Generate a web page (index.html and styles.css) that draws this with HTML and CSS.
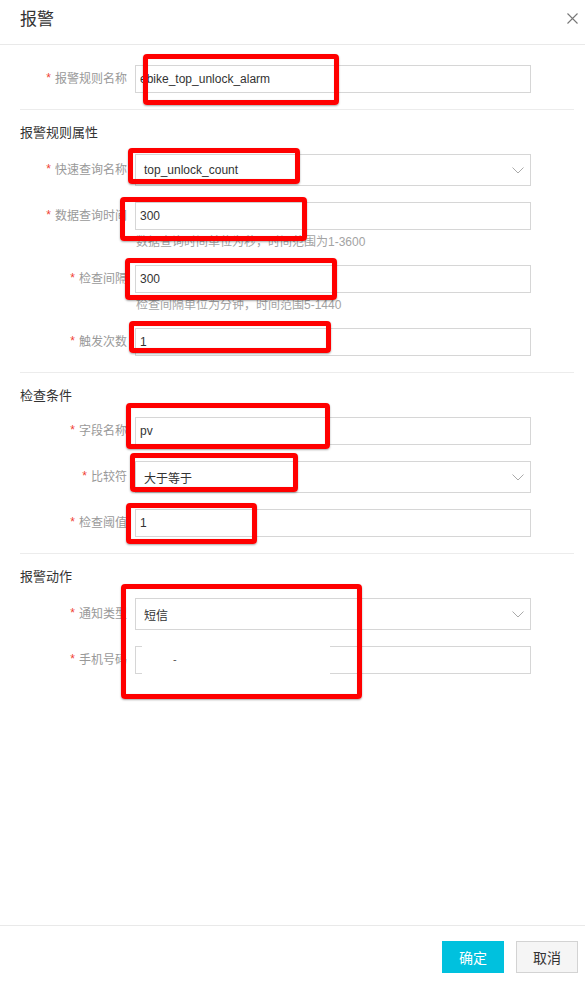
FILE: index.html
```html
<!DOCTYPE html>
<html lang="zh-CN">
<head>
<meta charset="utf-8">
<title>报警</title>
<link rel="stylesheet" href="styles.css">
</head>
<body>
<div class="dialog">
  <header class="dlg-head">
    <h1 class="dlg-title">报警</h1>
    <span class="dlg-close" aria-label="关闭">
      <svg width="11" height="11" viewBox="0 0 11 11"><path d="M0.5 0.5 L10.5 10.5 M10.5 0.5 L0.5 10.5" stroke="#777" stroke-width="1.1" fill="none"/></svg>
    </span>
  </header>

  <div class="dlg-body">
    <div class="form-row">
      <label class="form-label req">报警规则名称</label>
      <input class="field" type="text" value="ebike_top_unlock_alarm" readonly>
    </div>

    <section class="group">
      <h2 class="group-title">报警规则属性</h2>
      <div class="form-row">
        <label class="form-label req">快速查询名称</label>
        <div class="select"><span>top_unlock_count</span><svg class="arrow" width="12" height="7" viewBox="0 0 12 7"><polyline points="0.5,0.5 6,6 11.5,0.5" fill="none" stroke="#aaa" stroke-width="1"/></svg></div>
      </div>
      <div class="form-row">
        <label class="form-label req">数据查询时间</label>
        <input class="field" type="text" value="300" readonly>
        <div class="help">数据查询时间单位为秒，时间范围为1-3600</div>
      </div>
      <div class="form-row">
        <label class="form-label req">检查间隔</label>
        <input class="field" type="text" value="300" readonly>
        <div class="help">检查间隔单位为分钟，时间范围5-1440</div>
      </div>
      <div class="form-row">
        <label class="form-label req">触发次数</label>
        <input class="field" type="text" value="1" readonly>
      </div>
    </section>

    <section class="group">
      <h2 class="group-title">检查条件</h2>
      <div class="form-row">
        <label class="form-label req">字段名称</label>
        <input class="field" type="text" value="pv" readonly>
      </div>
      <div class="form-row">
        <label class="form-label req">比较符</label>
        <div class="select"><span>大于等于</span><svg class="arrow" width="12" height="7" viewBox="0 0 12 7"><polyline points="0.5,0.5 6,6 11.5,0.5" fill="none" stroke="#aaa" stroke-width="1"/></svg></div>
      </div>
      <div class="form-row">
        <label class="form-label req">检查阈值</label>
        <input class="field" type="text" value="1" readonly>
      </div>
    </section>

    <section class="group">
      <h2 class="group-title">报警动作</h2>
      <div class="form-row">
        <label class="form-label req">通知类型</label>
        <div class="select"><span>短信</span><svg class="arrow" width="12" height="7" viewBox="0 0 12 7"><polyline points="0.5,0.5 6,6 11.5,0.5" fill="none" stroke="#aaa" stroke-width="1"/></svg></div>
      </div>
      <div class="form-row">
        <label class="form-label req">手机号码</label>
        <input class="field" type="text" value="" readonly>
      </div>
    </section>
  </div>

  <footer class="dlg-foot">
    <button class="btn btn-primary" type="button">确定</button>
    <button class="btn btn-default" type="button">取消</button>
  </footer>

  <div class="smudge"><span class="speck">-</span></div>

  <div class="mark mark-1"></div>
  <div class="mark mark-2"></div>
  <div class="mark mark-3"></div>
  <div class="mark mark-4"></div>
  <div class="mark mark-5"></div>
  <div class="mark mark-6"></div>
  <div class="mark mark-7"></div>
  <div class="mark mark-8"></div>
  <div class="mark mark-9"></div>
</div>
</body>
</html>
```

FILE: styles.css
```css
* { box-sizing: border-box; }

html, body {
  margin: 0;
  padding: 0;
  background: #fff;
}

body {
  font-family: "Liberation Sans", "Noto Sans CJK SC", sans-serif;
  color: #333;
}

.dialog {
  position: relative;
  width: 585px;
  height: 989px;
  display: flex;
  flex-direction: column;
  background: #fff;
  overflow: hidden;
}

.dlg-head {
  height: 45px;
  flex: none;
  display: flex;
  justify-content: space-between;
  align-items: flex-start;
  border-bottom: 1px solid #e9e9e9;
}

.dlg-title {
  margin: 0;
  padding: 8px 0 0 20px;
  font-size: 17px;
  line-height: 24px;
  font-weight: normal;
  color: #333;
}

.dlg-close {
  display: block;
  width: 11px;
  height: 11px;
  margin: 13px 7px 0 0;
}
.dlg-close svg { display: block; }

.dlg-body {
  flex: 1;
  padding: 20px 11px 0 20px;
}

.form-row {
  display: grid;
  grid-template-columns: 107px 396px;
  column-gap: 8px;
  align-items: center;
  margin-bottom: 16px;
}

.form-label {
  grid-column: 1;
  grid-row: 1;
  text-align: right;
  font-size: 12px;
  line-height: 14px;
  color: #999;
  white-space: nowrap;
}

.form-label.req::before {
  content: "*";
  color: #f04134;
  margin-right: 4px;
  font-size: 12px;
  position: relative;
  top: -1px;
}

.field {
  grid-column: 2;
  grid-row: 1;
  display: block;
  width: 396px;
  height: 28px;
  margin: 0;
  padding: 0 4px;
  border: 1px solid #d6d6d6;
  border-radius: 0;
  background: #fff;
  font-family: "Liberation Sans", "Noto Sans CJK SC", sans-serif;
  font-size: 12px;
  color: #333;
  outline: none;
}

.select {
  grid-column: 2;
  grid-row: 1;
  display: flex;
  align-items: center;
  justify-content: space-between;
  width: 396px;
  height: 32px;
  padding: 0 6px 0 8px;
  border: 1px solid #d6d6d6;
  background: #fff;
  font-size: 12px;
  color: #333;
}
.select .arrow { display: block; }

.help {
  grid-column: 2;
  grid-row: 2;
  margin-top: 5px;
  padding-left: 1px;
  font-size: 12px;
  line-height: 14px;
  color: #a3a3a3;
}

.group {
  border-top: 1px solid #ececec;
}

.group-title {
  margin: 0;
  padding: 13px 0 11px;
  font-size: 13px;
  line-height: 20px;
  font-weight: normal;
  color: #333;
}

.dlg-foot {
  flex: none;
  height: 64px;
  border-top: 1px solid #e9e9e9;
  padding: 15px 7px 16px 0;
  display: flex;
  justify-content: flex-end;
  align-items: flex-start;
  gap: 12px;
}

.btn {
  width: 62px;
  height: 32px;
  margin: 0;
  padding: 0;
  font-family: "Liberation Sans", "Noto Sans CJK SC", sans-serif;
  font-size: 14px;
  border-radius: 0;
  cursor: pointer;
}

.btn-primary {
  background: #00c1de;
  color: #fff;
  border: 1px solid #00c1de;
}

.btn-default {
  background: #f5f5f5;
  color: #333;
  border: 1px solid #d3d3d3;
}

/* blurred-out phone number */
.smudge {
  position: absolute;
  left: 142px;
  top: 643px;
  width: 188px;
  height: 34px;
  background: #fff;
}
.speck {
  position: absolute;
  left: 31px;
  top: 9px;
  font-size: 11px;
  line-height: 14px;
  color: #555;
}

/* red annotation boxes drawn on the screenshot */
.mark {
  position: absolute;
  border: 5px solid #ff0000;
  border-radius: 4px;
  box-shadow: 0 1px 2px rgba(0, 0, 0, 0.35), inset 0 0 1px rgba(0, 0, 0, 0.25);
}
.mark-1 { left: 143px; top: 54px;  width: 196px; height: 51px; }
.mark-2 { left: 128px; top: 148px; width: 172px; height: 36px; }
.mark-3 { left: 120px; top: 197px; width: 187px; height: 44px; }
.mark-4 { left: 125px; top: 258px; width: 212px; height: 42px; }
.mark-5 { left: 129px; top: 321px; width: 202px; height: 32px; }
.mark-6 { left: 126px; top: 403px; width: 204px; height: 46px; }
.mark-7 { left: 130px; top: 453px; width: 168px; height: 39px; }
.mark-8 { left: 126px; top: 503px; width: 131px; height: 41px; }
.mark-9 { left: 121px; top: 584px; width: 241px; height: 115px; }
```
